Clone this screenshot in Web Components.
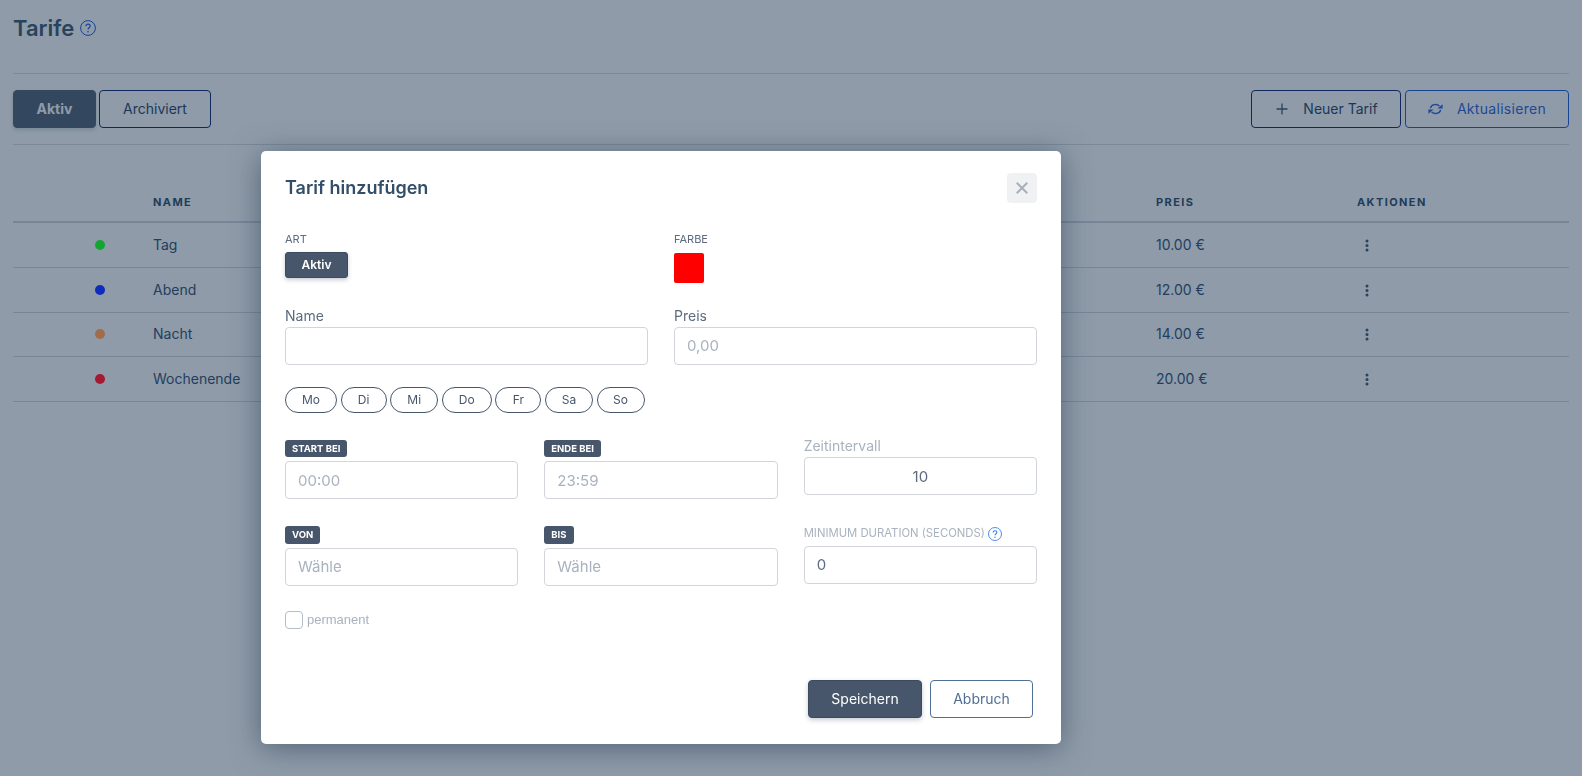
<!DOCTYPE html>
<html lang="de">
<head>
<meta charset="utf-8">
<title>Tarife</title>
<style>
  html, body { margin: 0; height: 100%; background: #fff; }
  body { font: 14px/20px Inter, "Noto Sans", sans-serif; color: #334e68; overflow: hidden; }
</style>
</head>
<body>
<tarif-page>
  <tarif-head>Tarife</tarif-head>
  <tarif-toolbar></tarif-toolbar>
  <tarif-table>
    <tarif-row color="#12a532" name="Tag" price="10.00 €"></tarif-row>
    <tarif-row color="#0f2bbd" name="Abend" price="12.00 €"></tarif-row>
    <tarif-row color="#a06c4c" name="Nacht" price="14.00 €"></tarif-row>
    <tarif-row color="#a51a32" name="Wochenende" price="20.00 €"></tarif-row>
  </tarif-table>
</tarif-page>
<tarif-overlay>
  <tarif-dialog></tarif-dialog>
</tarif-overlay>

<script>
(() => {
  const FONT = 'Inter, "Noto Sans", sans-serif';

  const help = (size, color) =>
    `<svg width="${size}" height="${size}" viewBox="0 0 16 16" fill="none" stroke="${color}" stroke-width="1">` +
    '<circle cx="8" cy="8" r="7.4"/>' +
    '<path d="M5.9 6.2c0-1.2 1-2 2.2-2s2.1.8 2.1 1.9c0 1.6-2.2 1.6-2.2 3.4" stroke-width="1.2"/>' +
    `<circle cx="8" cy="11.7" r=".8" fill="${color}" stroke="none"/></svg>`;

  const define = (tag, css, html, ready) => {
    customElements.define(tag, class extends HTMLElement {
      connectedCallback() {
        if (this.shadowRoot) return;
        const root = this.attachShadow({ mode: 'open' });
        root.innerHTML = '<style>' + css + '</style>' + (typeof html === 'function' ? html(this) : html);
        if (ready) ready(root, this);
      }
    });
  };

  define('tarif-page',
    ':host{display:block;padding:0 13px}',
    '<slot></slot>');

  define('tarif-head',
    ':host{display:flex;align-items:center;gap:6px;height:74px;padding-bottom:18px;box-sizing:border-box;' +
    '  border-bottom:1px solid #d6dbe2;font:600 22px/24px ' + FONT + ';color:#334e68}',
    () => '<slot></slot>' + help(16, '#0b50d8'));

  // page buttons, kind: solid / line / blue
  define('tarif-button',
    ':host{display:inline-flex;align-items:center;justify-content:center;box-sizing:border-box;height:38px;' +
    '  border:1px solid #001a66;border-radius:4px;font:14px/20px ' + FONT + ';color:#16375f;background:#fff}' +
    ':host([kind=solid]){background:#47566a;border-color:#47566a;color:#fff;font-weight:700;box-shadow:0 2px 4px rgba(30,50,80,.2)}' +
    ':host([kind=blue]){border-color:#0b50d8;color:#1a5ad8;letter-spacing:.3px}' +
    '::slotted(svg){margin-right:14px}',
    '<slot></slot>');

  define('tarif-toolbar',
    ':host{display:flex;align-items:center;height:71px;padding-bottom:1px;box-sizing:border-box;border-bottom:1px solid #d6dbe2}' +
    '.left,.right{display:flex;gap:3px}.right{margin-left:auto;gap:4px}',
    '<div class="left">' +
    '  <tarif-button kind="solid" style="width:83px">Aktiv</tarif-button>' +
    '  <tarif-button style="width:112px">Archiviert</tarif-button>' +
    '</div><div class="right">' +
    '  <tarif-button style="width:150px;padding-left:2px"><svg style="margin-right:15px" width="12" height="12" viewBox="0 0 12 12" stroke="#334e68" stroke-width="1.3"><path d="M6 .5v11M.5 6h11"/></svg>Neuer Tarif</tarif-button>' +
    '  <tarif-button kind="blue" style="width:164px"><svg width="15" height="12" viewBox="0 0 15 12" fill="#1a5ad8" stroke="none">' +
    '<path d="M2.4 5.2A5.2 4.6 0 0 1 11.4 3M12.6 6.8A5.2 4.6 0 0 1 3.6 9" fill="none" stroke="#1a5ad8" stroke-width="1.5"/>' +
    '<path d="M9.4 5.6h5.2V1.2zM5.6 6.4H.4v4.4z"/></svg>Aktualisieren</tarif-button>' +
    '</div>');

  const COLS = 'grid-template-columns:140px 1003px 201px 1fr;';

  define('tarif-table',
    ':host{display:block;margin-top:45px}' +
    '.th{display:grid;' + COLS + 'height:27px;padding-top:4px;border-bottom:2px solid #cfd5dd;font:700 11px/16px ' + FONT + ';letter-spacing:1.4px;color:#24405f}',
    '<div class="th"><span></span><span>NAME</span><span>PREIS</span><span>AKTIONEN</span></div><slot></slot>');

  define('tarif-row',
    ':host{display:grid;' + COLS + 'height:44.75px;box-sizing:border-box;align-items:center;border-bottom:1px solid #cfd5dd;color:#24456b}' +
    // the dots keep their full colour above the overlay
    '.dot{position:relative;z-index:2;width:10px;height:10px;border-radius:50%;margin-left:82px}' +
    '.more{display:block;margin:1px 0 0 8px}',
    el => `<span class="dot" style="background:${el.getAttribute('color')}"></span>` +
      `<span>${el.getAttribute('name')}</span><span>${el.getAttribute('price')}</span>` +
      '<span><svg class="more" width="4" height="13" viewBox="0 0 4 13" fill="#334e68"><circle cx="2" cy="2" r="1.5"/><circle cx="2" cy="6.5" r="1.5"/><circle cx="2" cy="11" r="1.5"/></svg></span>');

  define('tarif-overlay',
    ':host{position:fixed;inset:0;z-index:1;display:flex;justify-content:flex-start;align-items:flex-start;padding:151px 0 0 261px;' +
    '  box-sizing:border-box;background:rgba(31,55,81,.5)}',
    '<slot></slot>');

  define('tarif-input',
    ':host{display:flex;align-items:center;box-sizing:border-box;height:38px;padding:0 12px;border:1px solid #d3d5dc;' +
    '  border-radius:4px;background:#fff;font:15px/20px ' + FONT + ';color:#a9b2bf}' +
    ':host([value]){color:#5c6b80}:host([center]){justify-content:center}:host([low]){padding-top:2px}',
    '<slot></slot>');

  define('tarif-badge',
    ':host{display:inline-block;box-sizing:border-box;height:17px;padding:0 7px;border-radius:3px;background:#47566a;' +
    '  color:#fff;font:700 9.5px/17px ' + FONT + '}',
    '<slot></slot>');

  define('tarif-day',
    ':host{display:block;box-sizing:border-box;height:26px;border:1px solid #47566a;border-radius:13px;text-align:center;' +
    '  font:12px/24px ' + FONT + ';color:#47566a}',
    '<slot></slot>');

  define('tarif-dialog',
    ':host{display:block;width:800px;box-sizing:border-box;padding:0 24px 26px;background:#fff;border-radius:5px;' +
    '  box-shadow:0 4px 30px rgba(31,55,81,.55);color:#5c6b80}' +
    'header{display:flex;justify-content:space-between;align-items:center;padding-top:22px}' +
    'h2{margin:0;font:600 18px/30px ' + FONT + ';color:#334e68}' +
    '.close{display:flex;align-items:center;justify-content:center;width:30px;height:30px;border-radius:4px;background:#f0f1f3}' +
    '.two{display:grid;grid-template-columns:363px 363px;gap:26px}' +
    '.three{display:grid;grid-template-columns:repeat(3,1fr);gap:26px}' +
    '.small{font:11px/14px ' + FONT + ';color:#5c6b80}' +
    '.label{font:14px/20px ' + FONT + ';margin-bottom:1px}' +
    '.aktiv{display:inline-flex;align-items:center;justify-content:center;width:63px;height:26px;margin-top:6px;box-sizing:border-box;' +
    '  border-radius:3px;background:#47566a;color:#fff;font:600 12px/20px ' + FONT + ';box-shadow:0 2px 4px rgba(30,50,80,.25);border:1px solid #3c4a5d}' +
    '.red{width:30px;height:30px;margin-top:7px;background:#f00;border-radius:2px}' +
    '.days{display:flex;gap:3.6px;margin-top:22px}' +
    '.pad{padding-top:4px}.stack tarif-badge{display:table;margin-bottom:4px}.tall tarif-badge{height:18px;line-height:18px}' +
    '.faded{color:#a9b2bf}' +
    '.mini{display:flex;align-items:center;gap:3px;height:15px;font:11.3px/15px ' + FONT + ';color:#a9b2bf;margin-bottom:5px;white-space:nowrap}' +
    '.check{display:flex;align-items:center;gap:4px;margin-top:25px;font:13px/18px "Liberation Sans",sans-serif;color:#a9b2bf}' +
    '.box{width:18px;height:18px;box-sizing:border-box;border:1px solid #b6bdc9;border-radius:4px}' +
    'footer{display:flex;justify-content:flex-end;gap:8px;margin-top:51px;padding-right:4px}' +
    '.btn{display:flex;align-items:center;justify-content:center;height:38px;box-sizing:border-box;border-radius:4px;font:14px/20px ' + FONT + '}' +
    '.save{width:114px;background:#47566a;border:1px solid #3c4a5d;color:#fff;box-shadow:0 2px 5px rgba(30,50,80,.25)}' +
    '.abort{width:103px;background:#fff;border:1px solid #4f6f96;color:#4f6f96}',
    `<header><h2>Tarif hinzufügen</h2>
       <div class="close"><svg width="12" height="12" viewBox="0 0 12 12" stroke="#a9b0ba" stroke-width="2"><path d="M.7.7l10.6 10.6M11.3.7L.7 11.3"/></svg></div>
     </header>
     <div class="two" style="margin-top:29px">
       <div><div class="small">ART</div><div class="aktiv">Aktiv</div></div>
       <div><div class="small">FARBE</div><div class="red"></div></div>
     </div>
     <div class="two" style="margin-top:23px">
       <div><div class="label">Name</div><tarif-input></tarif-input></div>
       <div><div class="label">Preis</div><tarif-input>0,00</tarif-input></div>
     </div>
     <div class="days"><tarif-day style="width:52px">Mo</tarif-day><tarif-day style="width:46px">Di</tarif-day><tarif-day style="width:48px">Mi</tarif-day><tarif-day style="width:50px">Do</tarif-day><tarif-day style="width:46px">Fr</tarif-day><tarif-day style="width:48px">Sa</tarif-day><tarif-day style="width:48px">So</tarif-day></div>
     <div class="three" style="margin-top:23px">
       <div class="pad stack"><tarif-badge>START BEI</tarif-badge><tarif-input low>00:00</tarif-input></div>
       <div class="pad stack"><tarif-badge>ENDE BEI</tarif-badge><tarif-input low>23:59</tarif-input></div>
       <div><div class="label faded">Zeitintervall</div><tarif-input value center low>10</tarif-input></div>
     </div>
     <div class="three" style="margin-top:27px">
       <div class="stack tall"><tarif-badge>VON</tarif-badge><tarif-input>Wähle</tarif-input></div>
       <div class="stack tall"><tarif-badge>BIS</tarif-badge><tarif-input>Wähle</tarif-input></div>
       <div><div class="mini">MINIMUM DURATION (SECONDS) ${help(14, '#2f7fe8')}</div><tarif-input value>0</tarif-input></div>
     </div>
     <div class="check"><span class="box"></span>permanent</div>
     <footer><div class="btn save">Speichern</div><div class="btn abort">Abbruch</div></footer>`);
})();
</script>
</body>
</html>
